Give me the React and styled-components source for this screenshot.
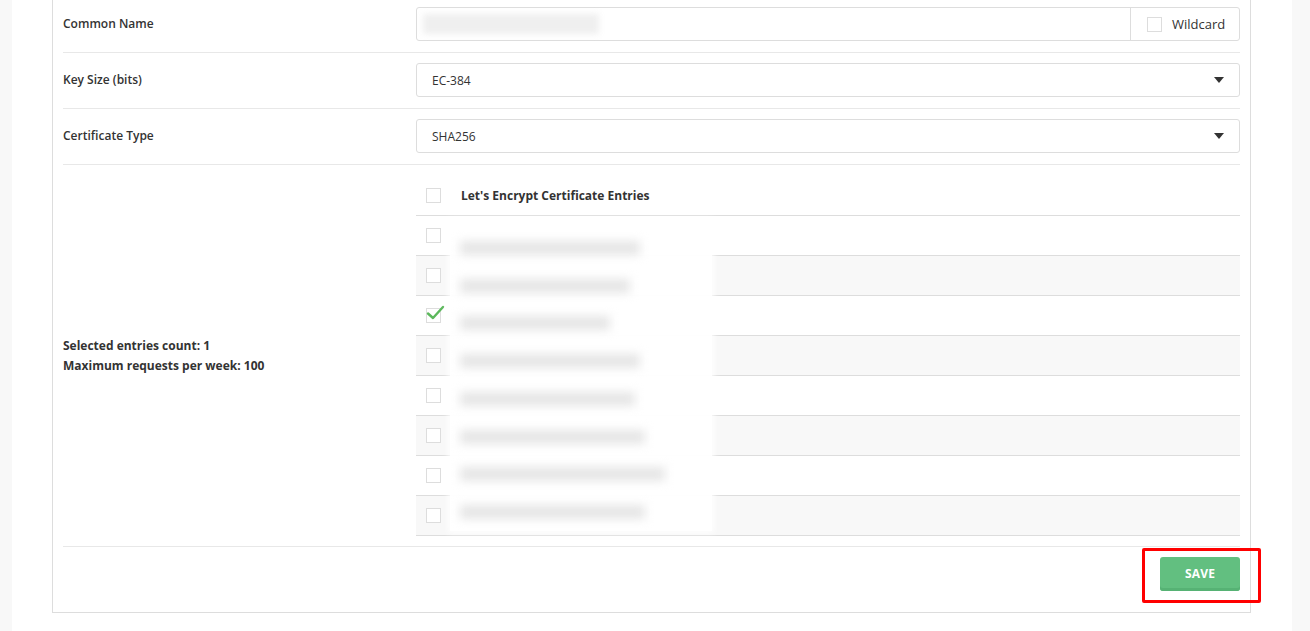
import React from "react";
import styled, { createGlobalStyle } from "styled-components";

const Global = createGlobalStyle`
  html, body { margin: 0; padding: 0; }
  body {
    background: #f8f8f8;
    font-family: "Open Sans", "Noto Sans", Arial, sans-serif;
    color: #333;
    font-size: 13px;
  }
`;

const Page = styled.div`
  margin: 0 18px 0 12px;
  background: #fff;
  min-height: 631px;
  padding: 0 41px 18px 40px;
  box-sizing: border-box;
`;

const Panel = styled.div`
  border: 1px solid #ddd;
  border-top: none;
  padding: 0 10px;
  background: #fff;
`;

const Row = styled.div`
  display: grid;
  grid-template-columns: 353px 1fr;
  align-items: center;
  padding: ${(p) => p.$pad || "10px 0 11px"};
  border-bottom: 1px solid #e8e8e8;
`;

const Label = styled.div`
  font-weight: 600;
  font-size: 12px;
  line-height: 20px;
  color: #333;
`;

const InputGroup = styled.div`
  display: flex;
  height: 34px;
  border: 1px solid #ddd;
  border-radius: 3px;
  box-sizing: border-box;
  background: #fff;
`;

const TextField = styled.div`
  flex: 1;
  display: flex;
  align-items: center;
  padding: 0 6px;
`;

const Blurred = styled.span`
  display: block;
  width: ${(p) => p.$w || 176}px;
  height: ${(p) => p.$h || 20}px;
  background: ${(p) => p.$bg || "#eeeeee"};
  filter: blur(${(p) => p.$blur || 3}px);
`;

const Addon = styled.div`
  display: flex;
  align-items: center;
  gap: 10px;
  width: 109px;
  box-sizing: border-box;
  padding-left: 16px;
  border-left: 1px solid #ddd;
  font-size: 13px;
`;

const Box = styled.span`
  position: relative;
  display: inline-block;
  width: 15px;
  height: 15px;
  border: 1px solid #ddd;
  box-sizing: border-box;
  background: #fff;
  flex: none;
`;

const Check = styled.svg`
  position: absolute;
  left: -1px;
  top: -5px;
`;

const Select = styled.div`
  display: flex;
  align-items: center;
  justify-content: space-between;
  height: 34px;
  border: 1px solid #ddd;
  border-radius: 3px;
  box-sizing: border-box;
  padding: 0 15px 0 15px;
  font-size: 12px;
  color: #333;
`;

const Caret = styled.span`
  width: 0;
  height: 0;
  border-left: 5px solid transparent;
  border-right: 5px solid transparent;
  border-top: 6px solid #333;
`;

const TableWrap = styled.div`
  position: relative;
  border-bottom: 1px solid #ddd;
`;

const TRow = styled.div`
  display: flex;
  align-items: center;
  height: ${(p) => (p.$head ? 40 : 39)}px;
  padding-left: 10px;
  gap: 20px;
  background: ${(p) => (p.$striped ? "#f8f8f8" : "#fff")};
  border-top: ${(p) => (p.$head ? "none" : "1px solid #ddd")};
`;

const HeadText = styled.span`
  font-weight: 700;
  font-size: 12px;
  color: #333;
`;

const BlurOverlay = styled.div`
  position: absolute;
  left: 34px;
  top: 46px;
  width: 262px;
  height: 310px;
  background: rgba(255, 255, 255, 0.96);
  box-shadow: 0 0 6px 2px rgba(255, 255, 255, 0.9);
  display: flex;
  flex-direction: column;
  padding-top: 8px;
  box-sizing: border-box;
`;

const BlurLine = styled.div`
  height: 40px;
  display: flex;
  align-items: center;
  padding-left: 10px;
`;

const Info = styled.div`
  font-weight: 700;
  font-size: 12px;
  line-height: 20px;
  color: #333;
`;

const Footer = styled.div`
  display: flex;
  justify-content: flex-end;
  padding: 10px 0 21px;
`;

const SaveWrap = styled.div`
  position: relative;
`;

const SaveButton = styled.button`
  width: 80px;
  height: 34px;
  border: none;
  border-radius: 3px;
  background: #62bf80;
  box-shadow: inset 0 -3px 0 #56b274;
  color: #fff;
  font-family: "Open Sans", Arial, sans-serif;
  font-weight: 700;
  font-size: 12px;
  letter-spacing: 0.2px;
  padding: 0 0 2px;
`;

const Highlight = styled.div`
  position: absolute;
  left: -18px;
  top: -9px;
  right: -21px;
  bottom: -12px;
  border: 3px solid #f00;
  border-radius: 2px;
  pointer-events: none;
`;

const entries = [
  { w: 180, checked: false },
  { w: 170, checked: false },
  { w: 150, checked: true },
  { w: 180, checked: false },
  { w: 175, checked: false },
  { w: 185, checked: false },
  { w: 205, checked: false },
  { w: 185, checked: false },
];

function CheckBox({ checked }) {
  return (
    <Box>
      {checked && (
        <Check width="20" height="16" viewBox="0 0 20 16">
          <path d="M2 9.5 L7 14 L17 3" stroke="#5cb85c" strokeWidth="2.4" fill="none" strokeLinecap="round" strokeLinejoin="round" />
        </Check>
      )}
    </Box>
  );
}

export default function App() {
  return (
    <>
      <Global />
      <Page>
        <Panel>
          <Row $pad="7px 0 11px">
            <Label>Common Name</Label>
            <InputGroup>
              <TextField>
                <Blurred $w={176} $h={20} $bg="#efefef" />
              </TextField>
              <Addon>
                <CheckBox />
                <span>Wildcard</span>
              </Addon>
            </InputGroup>
          </Row>
          <Row>
            <Label>Key Size (bits)</Label>
            <Select>
              <span>EC-384</span>
              <Caret />
            </Select>
          </Row>
          <Row>
            <Label>Certificate Type</Label>
            <Select>
              <span>SHA256</span>
              <Caret />
            </Select>
          </Row>
          <Row $pad="10px 0 10px">
            <Info>
              <div>Selected entries count: 1</div>
              <div>Maximum requests per week: 100</div>
            </Info>
            <TableWrap>
              <TRow $head>
                <CheckBox />
                <HeadText>Let's Encrypt Certificate Entries</HeadText>
              </TRow>
              {entries.map((e, i) => (
                <TRow key={i} $striped={i % 2 === 1}>
                  <CheckBox checked={e.checked} />
                </TRow>
              ))}
              <BlurOverlay>
                {entries.map((e, i) => (
                  <BlurLine key={i}>
                    <Blurred $w={e.w} $h={14} $bg="#e6e6e6" $blur={5} />
                  </BlurLine>
                ))}
              </BlurOverlay>
            </TableWrap>
          </Row>
          <Footer>
            <SaveWrap>
              <SaveButton>SAVE</SaveButton>
              <Highlight />
            </SaveWrap>
          </Footer>
        </Panel>
      </Page>
    </>
  );
}
